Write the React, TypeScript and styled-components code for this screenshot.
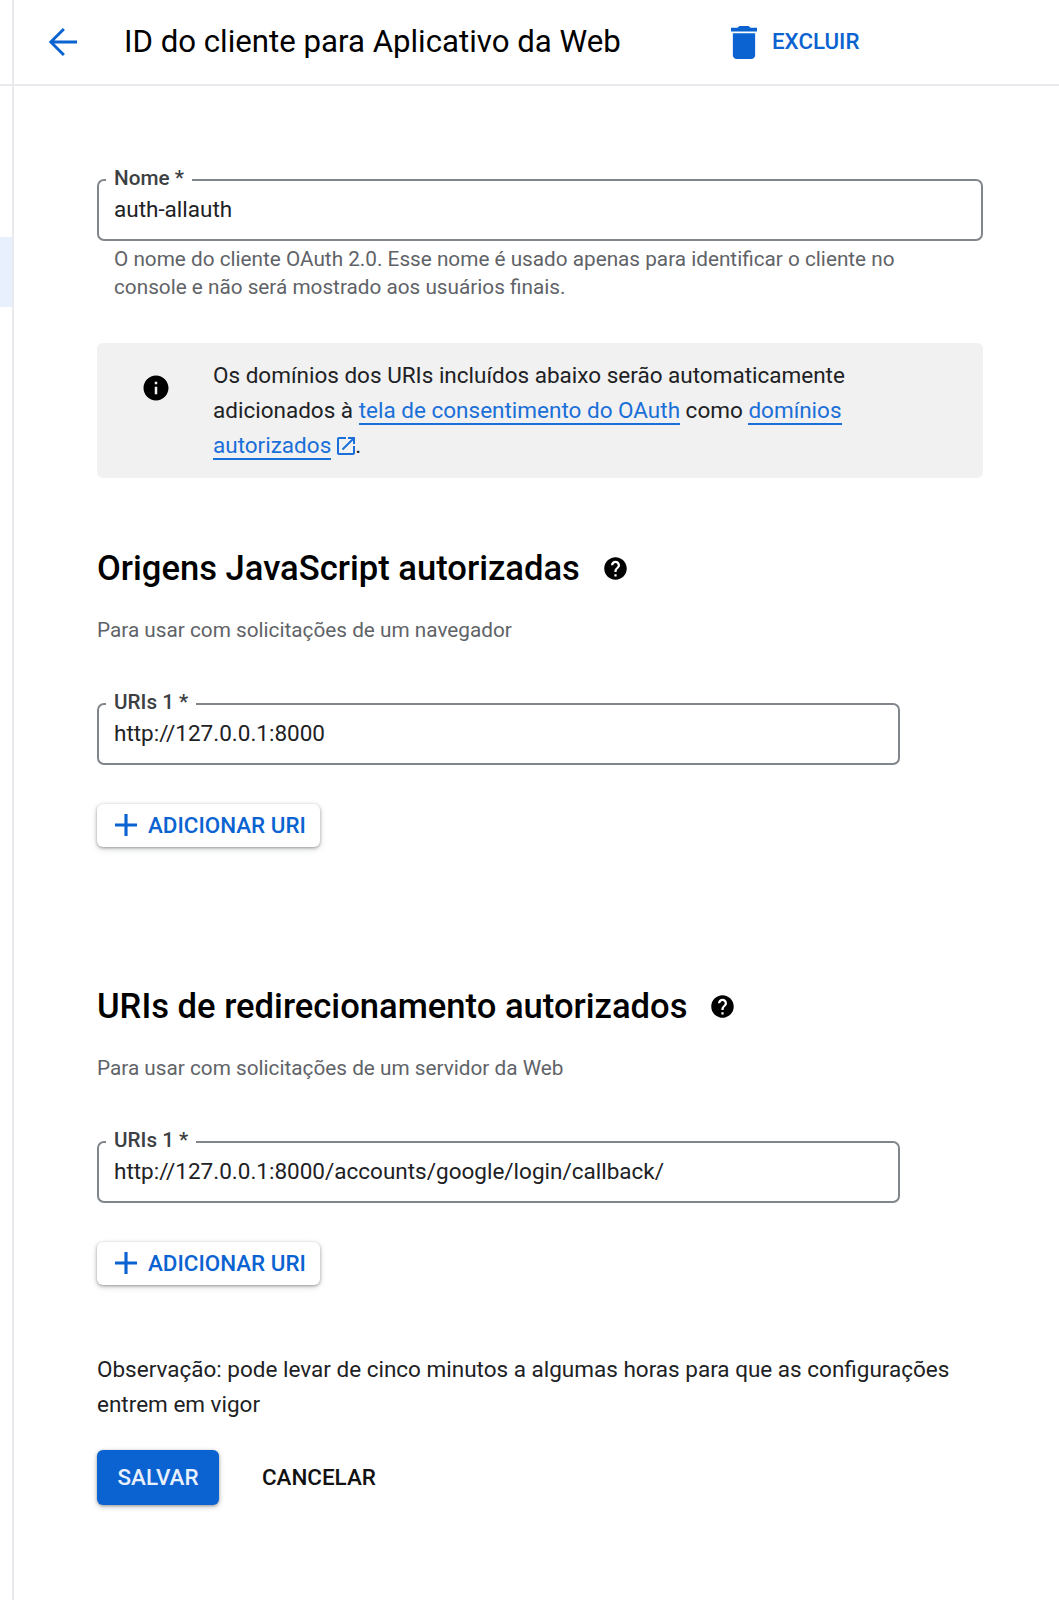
import styled, { createGlobalStyle } from "styled-components";

const GlobalStyle = createGlobalStyle`
  html, body {
    margin: 0;
    padding: 0;
    background: #fff;
  }
  body {
    font-family: "Roboto", "Liberation Sans", sans-serif;
    color: #202124;
  }
`;

const Page = styled.div`
  display: flex;
  width: 1059px;
  height: 1600px;
  overflow: hidden;
  background: #fff;
`;

const Rail = styled.aside`
  width: 12px;
  flex: none;
  border-right: 2px solid #e8eaed;
  display: flex;
  flex-direction: column;
`;

const RailTop = styled.div`
  height: 84px;
  border-bottom: 2px solid #e8eaed;
  margin-right: -2px;
`;

const RailActive = styled.div`
  height: 70px;
  margin-top: 151px;
  background: #e8f0fe;
`;

const Main = styled.main`
  flex: 1;
  min-width: 0;
  display: flex;
  flex-direction: column;
`;

const Header = styled.header`
  height: 84px;
  flex: none;
  box-sizing: content-box;
  border-bottom: 2px solid #e8eaed;
  display: flex;
  align-items: center;
  padding: 0 0 0 33px;
`;

const BackButton = styled.button`
  width: 32px;
  height: 32px;
  padding: 0;
  border: 0;
  background: none;
  color: #0b63d1;
  display: flex;
  align-items: center;
  justify-content: center;
`;

const Title = styled.h1`
  margin: -2px 0 0 45px;
  width: 607px;
  font-size: 31.2px;
  font-weight: 400;
  color: #000;
  white-space: nowrap;
`;

const DeleteButton = styled.button`
  display: flex;
  align-items: center;
  gap: 15px;
  padding: 0 0 2px;
  border: 0;
  background: none;
  color: #0b63d1;
  font: 500 22.3px "Roboto", sans-serif;
`;

const TrashIcon = styled.svg`
  margin-top: 3px;
`;

const Content = styled.div`
  padding: 85px 0 0 83px;
  width: 886px;
`;

const Outline = styled.fieldset<{ $narrow?: boolean }>`
  margin: 0;
  padding: 0 15px;
  height: 70px;
  box-sizing: border-box;
  width: ${({ $narrow }) => ($narrow ? "803px" : "886px")};
  border: 2px solid #80868b;
  border-radius: 7px;
  display: flex;
  align-items: center;
`;

const OutlineLabel = styled.legend`
  margin-left: -8px;
  padding: 0 8px;
  font-size: 20.7px;
  font-weight: 500;
  line-height: 18px;
  color: #3c4043;
  transform: translateY(-2px);
`;

const OutlineValue = styled.span`
  font-size: 22.5px;
  color: #202124;
  white-space: nowrap;
  margin-top: -11px;
`;

const Hint = styled.p`
  margin: 4px 0 0;
  padding-left: 17px;
  font-size: 20.74px;
  line-height: 28px;
  color: #5f6368;
  width: 840px;
`;

const Notice = styled.div`
  margin-top: 42px;
  height: 135px;
  box-sizing: border-box;
  width: 886px;
  background: #f1f1f1;
  border-radius: 6px;
  display: flex;
  padding: 15px 0 0 44px;
`;

const NoticeIcon = styled.div`
  width: 24px;
  height: 24px;
  flex: none;
  margin-top: 15px;
  color: #000;
`;

const NoticeText = styled.p`
  margin: 0 0 0 48px;
  font-size: 22.5px;
  line-height: 35px;
  color: #202124;
  width: 720px;
`;

const Link = styled.a`
  color: #1a6fd8;
  border-bottom: 2px solid #1a6fd8;
`;

const ExternalIcon = styled.span`
  display: inline-flex;
  vertical-align: -2px;
  margin-left: 6px;
  color: #1a6fd8;
`;

const Section = styled.section<{ $gap: number }>`
  margin-top: ${({ $gap }) => $gap}px;
`;

const SectionTitle = styled.h2`
  margin: 0;
  display: flex;
  align-items: center;
  gap: 22px;
  font-size: 34.6px;
  line-height: 44px;
  font-weight: 500;
  color: #000;
`;

const Subtitle = styled.p`
  margin: 26px 0 51px;
  font-size: 20.75px;
  line-height: 28px;
  color: #5f6368;
`;

const AddButton = styled.button`
  margin-top: 39px;
  display: flex;
  align-items: center;
  gap: 11px;
  height: 43px;
  box-sizing: border-box;
  padding: 0 14px 2px 18px;
  border: 0;
  border-radius: 6px;
  background: #fff;
  color: #0b63d1;
  font: 500 22.4px "Roboto", sans-serif;
  box-shadow: 0 1px 3px rgba(60, 64, 67, 0.45), 0 2px 6px rgba(60, 64, 67, 0.2);
`;

const Note = styled.p`
  margin: 67px 0 0;
  font-size: 22.5px;
  line-height: 35px;
  color: #202124;
  width: 880px;
`;

const Actions = styled.div`
  margin-top: 28px;
  display: flex;
  align-items: center;
  gap: 43px;
`;

const SaveButton = styled.button`
  width: 122px;
  height: 55px;
  padding: 0 0 2px;
  border: 0;
  border-radius: 6px;
  background: #0b63d1;
  color: #e8f0fe;
  font: 500 22.4px "Roboto", sans-serif;
  box-shadow: 0 1px 3px rgba(60, 64, 67, 0.45), 0 2px 6px rgba(60, 64, 67, 0.2);
`;

const CancelButton = styled.button`
  padding: 0 0 2px;
  border: 0;
  background: none;
  color: #111;
  font: 500 22.4px "Roboto", sans-serif;
`;

const HelpIcon = () => (
  <svg width="27" height="27" viewBox="0 0 24 24" fill="#000">
    <path d="M12 2C6.48 2 2 6.48 2 12s4.48 10 10 10 10-4.48 10-10S17.52 2 12 2zm1 17h-2v-2h2v2zm2.07-7.75-.9.92C13.45 12.9 13 13.5 13 15h-2v-.5c0-1.1.45-2.1 1.17-2.83l1.24-1.26c.37-.36.59-.86.59-1.41 0-1.1-.9-2-2-2s-2 .9-2 2H8c0-2.21 1.79-4 4-4s4 1.79 4 4c0 .88-.36 1.68-.93 2.25z" />
  </svg>
);

const PlusIcon = () => (
  <svg width="22" height="22" viewBox="5 5 14 14" fill="currentColor">
    <path d="M19 13h-6v6h-2v-6H5v-2h6V5h2v6h6v2z" />
  </svg>
);

const UriBlock = ({ value }: { value: string }) => (
  <>
    <Outline $narrow>
      <OutlineLabel>URIs 1 *</OutlineLabel>
      <OutlineValue>{value}</OutlineValue>
    </Outline>
    <AddButton>
      <PlusIcon />
      ADICIONAR URI
    </AddButton>
  </>
);

export default function App() {
  return (
    <Page>
      <GlobalStyle />
      <Rail>
        <RailTop />
        <RailActive />
      </Rail>
      <Main>
        <Header>
          <BackButton aria-label="Voltar">
            <svg width="28" height="28" viewBox="4 4 16 16" fill="none" stroke="currentColor" strokeWidth="1.7">
              <path d="M20 12H5M12.5 4.6 5 12l7.5 7.4" />
            </svg>
          </BackButton>
          <Title>ID do cliente para Aplicativo da Web</Title>
          <DeleteButton>
            <TrashIcon width="26" height="33" viewBox="5 3 14 18" fill="currentColor" preserveAspectRatio="none">
              <path d="M6 19c0 1.1.9 2 2 2h8c1.1 0 2-.9 2-2V7H6v12zM19 4h-3.5l-1-1h-5l-1 1H5v2h14V4z" />
            </TrashIcon>
            EXCLUIR
          </DeleteButton>
        </Header>
        <Content>
          <Outline>
            <OutlineLabel>Nome *</OutlineLabel>
            <OutlineValue>auth-allauth</OutlineValue>
          </Outline>
          <Hint>
            O nome do cliente OAuth 2.0. Esse nome é usado apenas para identificar o cliente no console e não será
            mostrado aos usuários finais.
          </Hint>
          <Notice>
            <NoticeIcon>
              <svg width="30" height="30" viewBox="0 0 24 24" fill="currentColor">
                <path d="M12 2C6.48 2 2 6.48 2 12s4.48 10 10 10 10-4.48 10-10S17.52 2 12 2zm1 15h-2v-6h2v6zm0-8h-2V7h2v2z" />
              </svg>
            </NoticeIcon>
            <NoticeText>
              Os domínios dos URIs incluídos abaixo serão automaticamente adicionados à{" "}
              <Link>tela de consentimento do OAuth</Link> como <Link>domínios</Link> <Link>autorizados</Link>
              <ExternalIcon>
                <svg width="18" height="18" viewBox="3 3 18 18" fill="currentColor">
                  <path d="M19 19H5V5h7V3H5c-1.11 0-2 .9-2 2v14c0 1.1.89 2 2 2h14c1.1 0 2-.9 2-2v-7h-2v7zM14 3v2h3.59l-9.83 9.83 1.41 1.41L19 6.41V10h2V3h-7z" />
                </svg>
              </ExternalIcon>
              .
            </NoticeText>
          </Notice>
          <Section $gap={68}>
            <SectionTitle>
              Origens JavaScript autorizadas
              <HelpIcon />
            </SectionTitle>
            <Subtitle>Para usar com solicitações de um navegador</Subtitle>
            <UriBlock value="http://127.0.0.1:8000" />
          </Section>
          <Section $gap={137}>
            <SectionTitle>
              URIs de redirecionamento autorizados
              <HelpIcon />
            </SectionTitle>
            <Subtitle>Para usar com solicitações de um servidor da Web</Subtitle>
            <UriBlock value="http://127.0.0.1:8000/accounts/google/login/callback/" />
          </Section>
          <Note>
            Observação: pode levar de cinco minutos a algumas horas para que as configurações entrem em vigor
          </Note>
          <Actions>
            <SaveButton>SALVAR</SaveButton>
            <CancelButton>CANCELAR</CancelButton>
          </Actions>
        </Content>
      </Main>
    </Page>
  );
}
